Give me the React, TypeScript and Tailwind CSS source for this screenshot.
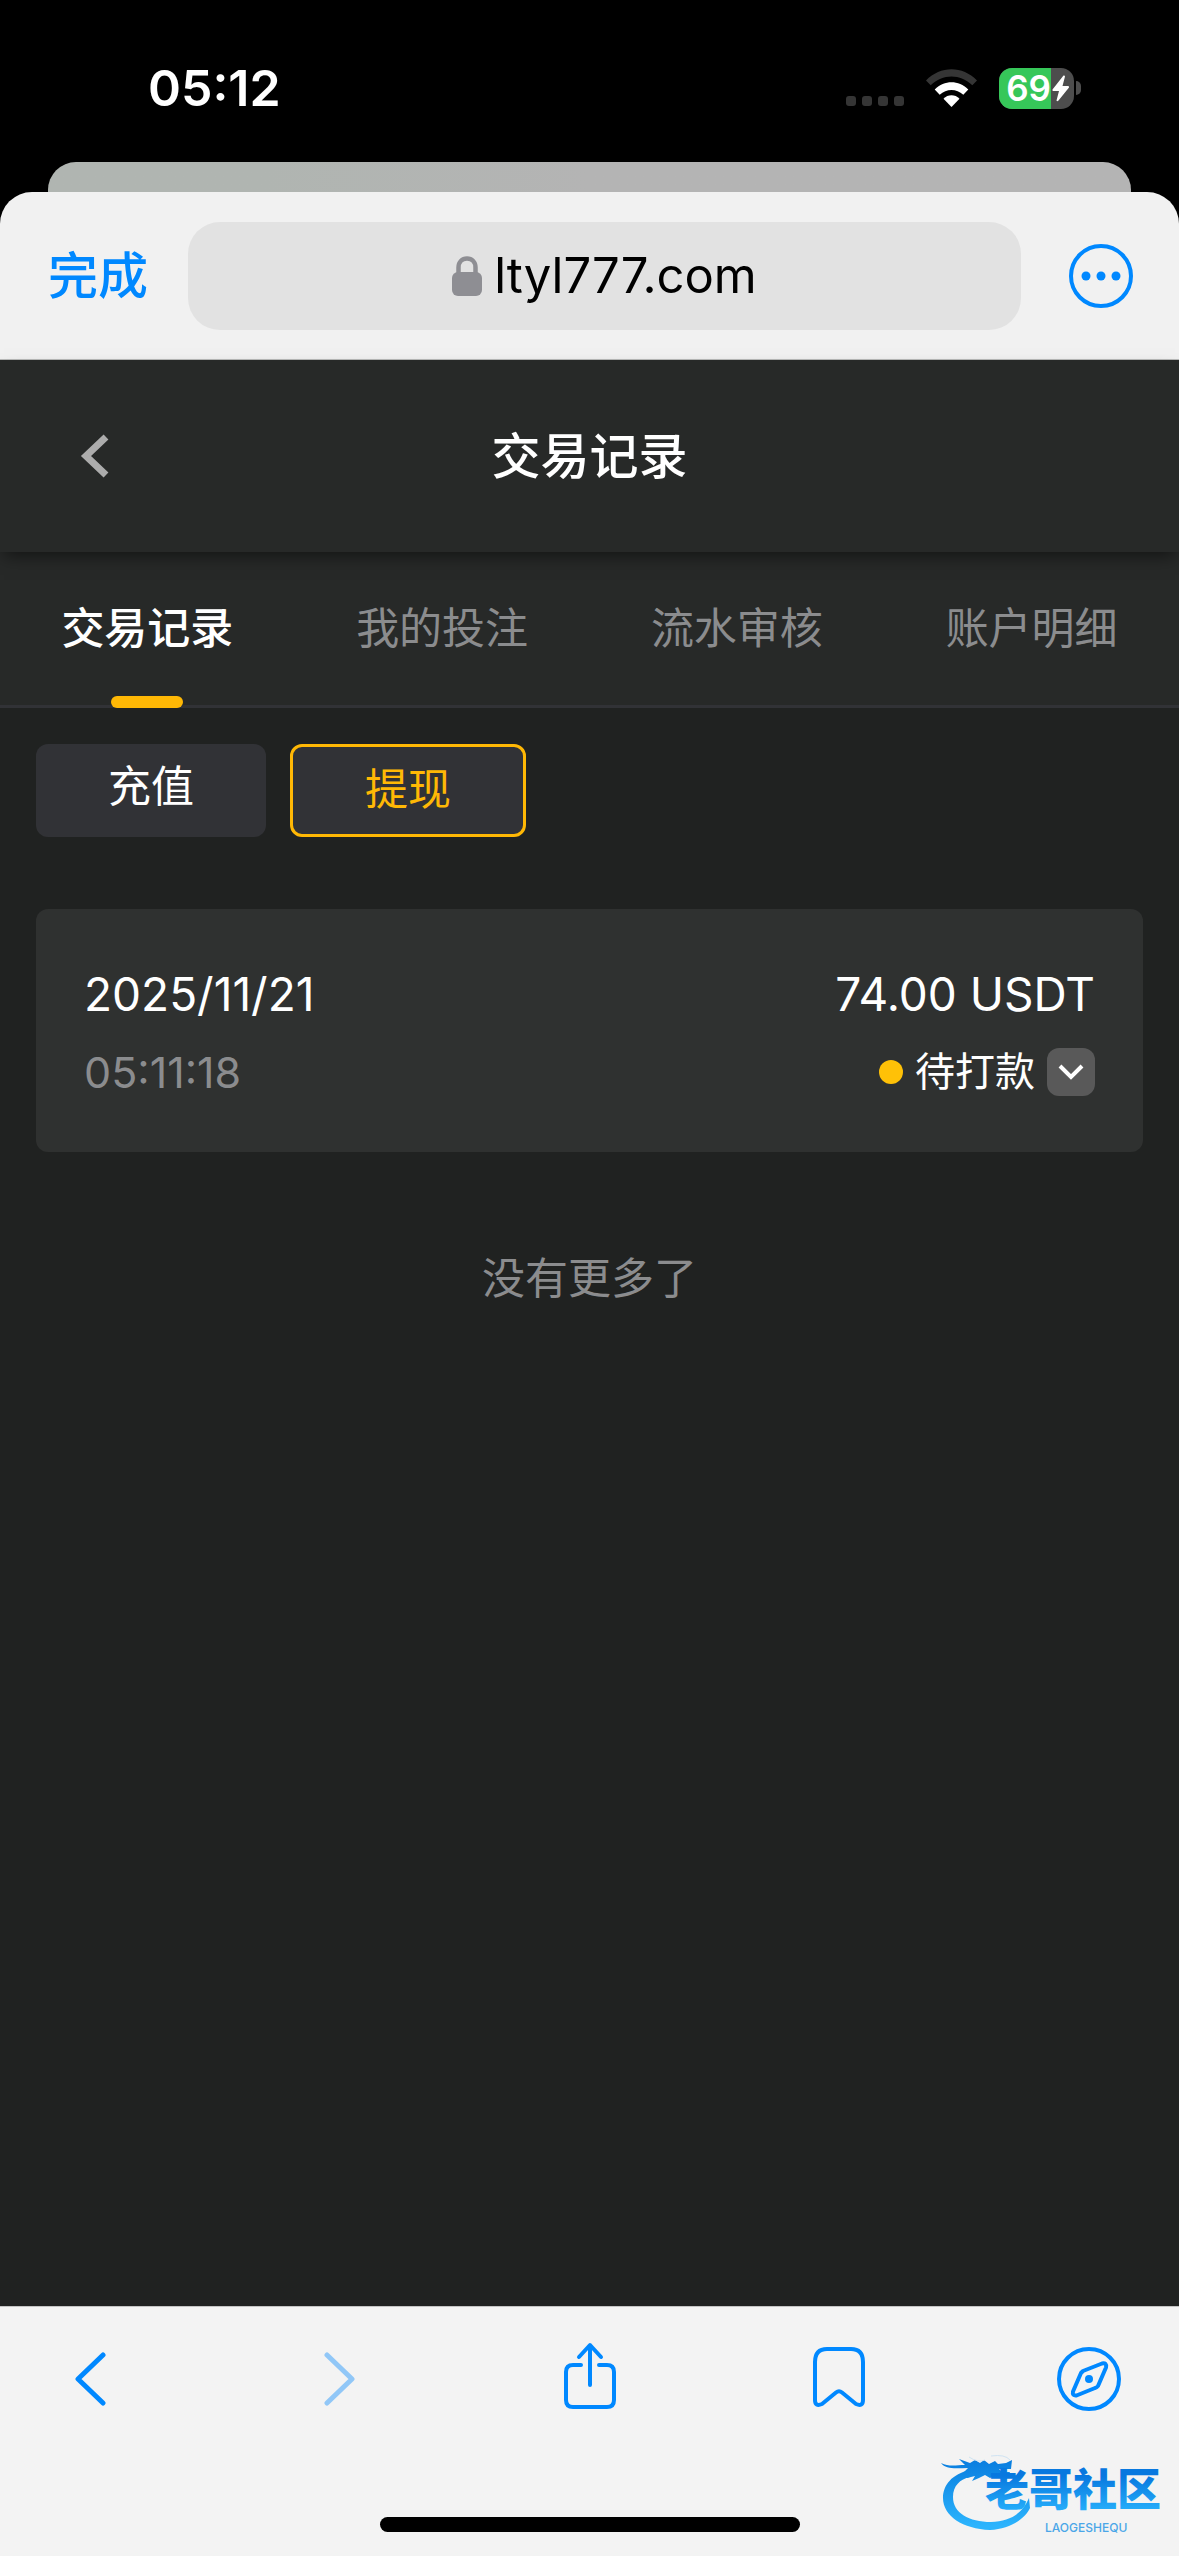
import { useState } from 'react';

type TabType = { id: number; name: string };
type RecordType = {
  id: number;
  date: string;
  time: string;
  amount: string;
  status: string;
};

const tabs: TabType[] = [
  { id: 1, name: '交易记录' },
  { id: 2, name: '我的投注' },
  { id: 3, name: '流水审核' },
  { id: 4, name: '账户明细' },
];

const records: RecordType[] = [
  {
    id: 1,
    date: '2025/11/21',
    time: '05:11:18',
    amount: '74.00 USDT',
    status: '待打款',
  },
];

const StatusBar = () => (
  <div className="flex h-[162px] items-center justify-between pt-[14px] pr-[98px] pl-[148px] text-white">
    <span className="text-[50px] leading-none font-semibold">05:12</span>
    <div className="flex items-center gap-[22px]">
      <div className="flex gap-[6px] pt-[26px]">
        {[0, 1, 2, 3].map((dot) => (
          <span key={dot} className="size-[10px] rounded-[3px] bg-[#353535]" />
        ))}
      </div>
      <svg width="51" height="38" viewBox="0 0 51 38" fill="none">
        <path
          d="M0 11.5C14.5-3.5 36.500-3.500 51 11.500L46.300 16.300C34.500 4.600 16.500 4.600 4.700 16.300Z"
          fill="#353535"
        />
        <path
          d="M8.700 20.500C18.500 10.900 32.500 10.900 42.300 20.500L37.300 25.700C30.500 19.300 20.500 19.300 13.700 25.700Z"
          fill="#fff"
        />
        <path
          d="M17.500 29.700C22 25.200 29 25.200 33.500 29.700L25.500 38Z"
          fill="#fff"
        />
      </svg>
      <div className="flex items-center gap-[2px]">
        <div className="flex h-[41px] w-[75px] items-center overflow-hidden rounded-[13px] bg-[#4d4d4d]">
          <span className="flex h-full w-[52px] items-center justify-end bg-[#36c759] text-[35px] leading-none font-semibold">
            69
          </span>
          <svg width="20" height="27" viewBox="0 0 20 27" fill="#fff">
            <path d="M12.500.5L1.500 14.500Q1 16 2.500 16H8L5.500 25.500Q6 27 7.500 25.500L18 12.500Q18.500 11 17 11H11.500L14 1.500Q13.800 0 12.500.500Z" />
          </svg>
        </div>
        <span className="h-[14px] w-[5px] rounded-r-full bg-[#4d4d4d]" />
      </div>
    </div>
  </div>
);

const BrowserBar = () => (
  <div className="bg-black">
    <div className="mx-[48px] h-[30px] rounded-t-[28px] bg-linear-to-r from-[#b0b5b1] from-20% to-[#b4b4b4] to-50%" />
    <div className="flex h-[168px] items-center rounded-t-[32px] border-b border-[#b9bab9] bg-[#f1f1f1] px-[46px]">
      <button className="w-[142px] pl-[2px] text-left text-[50px] leading-none font-medium text-[#0088ff]">
        完成
      </button>
      <button className="flex h-[108px] flex-1 items-center justify-center gap-[12px] rounded-[32px] bg-[#e2e2e2] text-[49px] leading-none text-black">
        <svg width="30" height="40" viewBox="0 0 30 40" fill="none">
          <path
            d="M6.500 18V11.500C6.500 6 10 2.500 15 2.500S23.500 6 23.500 11.500V18"
            stroke="#8e8e93"
            strokeWidth="4.500"
          />
          <rect y="16" width="30" height="24" rx="6" fill="#8e8e93" />
        </svg>
        ltyl777.com
      </button>
      <button aria-label="更多" className="ml-[48px]">
        <svg width="64" height="64" viewBox="0 0 64 64" fill="#0088ff">
          <circle
            cx="32"
            cy="32"
            r="30"
            fill="none"
            stroke="#0088ff"
            strokeWidth="4"
          />
          <circle cx="17" cy="32" r="4.500" />
          <circle cx="32" cy="32" r="4.500" />
          <circle cx="47" cy="32" r="4.500" />
        </svg>
      </button>
    </div>
  </div>
);

const CommunityLogo = () => (
  <svg width="226" height="80" viewBox="0 0 226 80" fill="none">
    <defs>
      <linearGradient id="logo" x1="0" y1="8" x2="0" y2="72" gradientUnits="userSpaceOnUse">
        <stop stopColor="#0a7fe0" />
        <stop offset="1" stopColor="#2cb4fd" />
      </linearGradient>
      <linearGradient id="name" x1="0" y1="22" x2="0" y2="58" gradientUnits="userSpaceOnUse">
        <stop stopColor="#0878df" />
        <stop offset="1" stopColor="#27b0fc" />
      </linearGradient>
    </defs>
    {/* dragon body */}
    <path
      d="M29 16C11 20 2 31 2 44C2 62 22 75 49 76C69 75 84 65 89 54L88 44C81 60 69 67 50 68C28 68 12 59 12 43C12 32 19 25 29 23Z"
      fill="url(#logo)"
    />
    {/* head, horns and whiskers */}
    <path
      d="M0 9C8 13 15 11 24 11L18 5L29 9L34 6L39 9L43 6L48 10L54 7L57 10L65 9L71 6L70 15L58 15L61 18L69 18L67 23L56 21L49 24L44 21L38 24L31 27L34 22L26 24L21 20L27 14C16 14 5 16 0 9Z"
      fill="url(#logo)"
    />
    <path d="M28 3Q37 9 44 6M50 2Q64 0 69 6" stroke="#cfe3f2" />
    <text x="44" y="52" fill="url(#name)" className="text-[44px] font-black">
      老哥社区
    </text>
    <text x="104" y="78" fill="#4aa6e8" className="text-[12px] font-medium">
      LAOGESHEQU
    </text>
  </svg>
);

const BottomBar = () => (
  <footer className="relative flex h-[250px] flex-col justify-between border-t border-[#c4c4c4] bg-[#f3f3f3] pb-[24px]">
    <div className="flex h-[144px] items-center justify-between px-[58px] text-[#0088ff]">
      <button aria-label="后退" className="w-[64px] pl-[16px]">
        <svg width="32" height="54" viewBox="0 0 32 54" fill="none">
          <path
            d="M29 3L4 27L29 51"
            stroke="currentColor"
            strokeWidth="5"
            strokeLinecap="round"
            strokeLinejoin="round"
          />
        </svg>
      </button>
      <button aria-label="前进" disabled className="w-[64px] pl-[16px] opacity-40">
        <svg width="32" height="54" viewBox="0 0 32 54" fill="none">
          <path
            d="M3 3L28 27L3 51"
            stroke="currentColor"
            strokeWidth="5"
            strokeLinecap="round"
            strokeLinejoin="round"
          />
        </svg>
      </button>
      <button aria-label="分享" className="flex w-[64px] justify-center pb-[6px]">
        <svg width="54" height="68" viewBox="0 0 54 68" fill="none">
          <path
            d="M18 23H10Q3 23 3 30V58Q3 65 10 65H44Q51 65 51 58V30Q51 23 44 23H36M27 43V4M16 15L27 3L38 15"
            stroke="currentColor"
            strokeWidth="4"
            strokeLinecap="round"
            strokeLinejoin="round"
          />
        </svg>
      </button>
      <button aria-label="书签" className="flex w-[64px] justify-center pb-[4px]">
        <svg width="54" height="60" viewBox="0 0 54 60" fill="none">
          <path
            d="M3 15Q3 2 15 2H39Q51 2 51 15V53Q51 60 44 57L30 45.500Q27 43 24 45.500L10 57Q3 60 3 53Z"
            stroke="currentColor"
            strokeWidth="4"
            strokeLinejoin="round"
          />
        </svg>
      </button>
      <button aria-label="浏览器">
        <svg width="64" height="64" viewBox="0 0 64 64" fill="none">
          <circle cx="32" cy="32" r="30" stroke="currentColor" strokeWidth="4" />
          <path
            d="M26 24L45 16.500Q50 15.500 49 20.500L41 39Q40 40.500 38 41L19.500 48.500Q15 49 16 44.500L24 26Z"
            stroke="currentColor"
            strokeWidth="4"
            strokeLinejoin="round"
          />
          <circle cx="32" cy="32" r="4" fill="currentColor" />
        </svg>
      </button>
    </div>
    <div className="mx-auto h-[15px] w-[420px] rounded-full bg-black" />
    <div className="absolute right-[12px] bottom-[22px]">
      <CommunityLogo />
    </div>
  </footer>
);

const App = () => {
  const [activeTab, setActiveTab] = useState(1);
  const [type, setType] = useState('withdraw');

  const typeClass = (active: boolean) =>
    active
      ? 'flex h-[93px] items-start rounded-[12px] border-3 border-[#ffb805] bg-[#313236] px-[72px] pt-[18px] text-[#ffb805]'
      : 'flex h-[93px] items-start rounded-[12px] bg-[#313236] px-[72px] pt-[18px] text-white';

  return (
    <div className="flex min-h-screen flex-col bg-black font-['Inter','Noto_Sans_CJK_SC',sans-serif]">
      <StatusBar />
      <BrowserBar />
      <main className="flex-1 bg-[#202221] text-white">
        <header className="relative grid h-[192px] grid-cols-[1fr_auto_1fr] items-center bg-[#272928] px-[80px] shadow-[0_8px_16px_-4px_rgba(0,0,0,0.5)]">
          <button aria-label="返回">
            <svg width="30" height="44" viewBox="0 0 30 44" fill="none">
              <path d="M26 3L6 22L26 41" stroke="#acacac" strokeWidth="7" />
            </svg>
          </button>
          <h1 className="text-[49px] leading-none font-medium">交易记录</h1>
        </header>
        <nav className="grid h-[156px] grid-cols-4 border-b-3 border-[#313236] bg-[#272928] text-[43px] leading-none">
          {tabs.map((tab) => (
            <button
              key={tab.id}
              onClick={() => setActiveTab(tab.id)}
              className={
                tab.id === activeTab
                  ? 'relative font-medium text-white'
                  : 'relative text-[#8b8c8e]'
              }
            >
              {tab.name}
              {tab.id === activeTab && (
                <span className="absolute -bottom-[3px] left-1/2 h-[12px] w-[72px] -translate-x-1/2 rounded-[6px] bg-[#ffb805]" />
              )}
            </button>
          ))}
        </nav>
        <section className="px-[36px] pt-[36px]">
          <div className="flex gap-[24px] text-[43px] leading-[48px]">
            <button
              onClick={() => setType('deposit')}
              className={typeClass(type === 'deposit')}
            >
              充值
            </button>
            <button
              onClick={() => setType('withdraw')}
              className={typeClass(type === 'withdraw')}
            >
              提现
            </button>
          </div>
          {records.map((record) => (
            <div
              key={record.id}
              className="mt-[72px] flex h-[243px] flex-col gap-[24px] rounded-[12px] bg-[#2f3130] px-[48px] pt-[57px]"
            >
              <div className="flex justify-between text-[46px] leading-[56px]">
                <span>{record.date}</span>
                <span>{record.amount}</span>
              </div>
              <div className="flex h-[52px] items-center justify-between leading-[48px]">
                <span className="text-[43px] text-[#8b8c8e]">{record.time}</span>
                <div className="flex items-center gap-[12px] text-[40px]">
                  <span className="size-[24px] rounded-full bg-[#ffc107]" />
                  <span>{record.status}</span>
                  <button
                    aria-label="展开"
                    className="flex size-[48px] items-center justify-center rounded-[12px] bg-[#595959]"
                  >
                    <svg width="26" height="18" viewBox="0 0 26 18" fill="none">
                      <path d="M2 3L13 14L24 3" stroke="#fff" strokeWidth="4" />
                    </svg>
                  </button>
                </div>
              </div>
            </div>
          ))}
          <p className="mt-[96px] text-center text-[43px] leading-[60px] text-[#8b8c8e]">
            没有更多了
          </p>
        </section>
      </main>
      <BottomBar />
    </div>
  );
};

export default App;
